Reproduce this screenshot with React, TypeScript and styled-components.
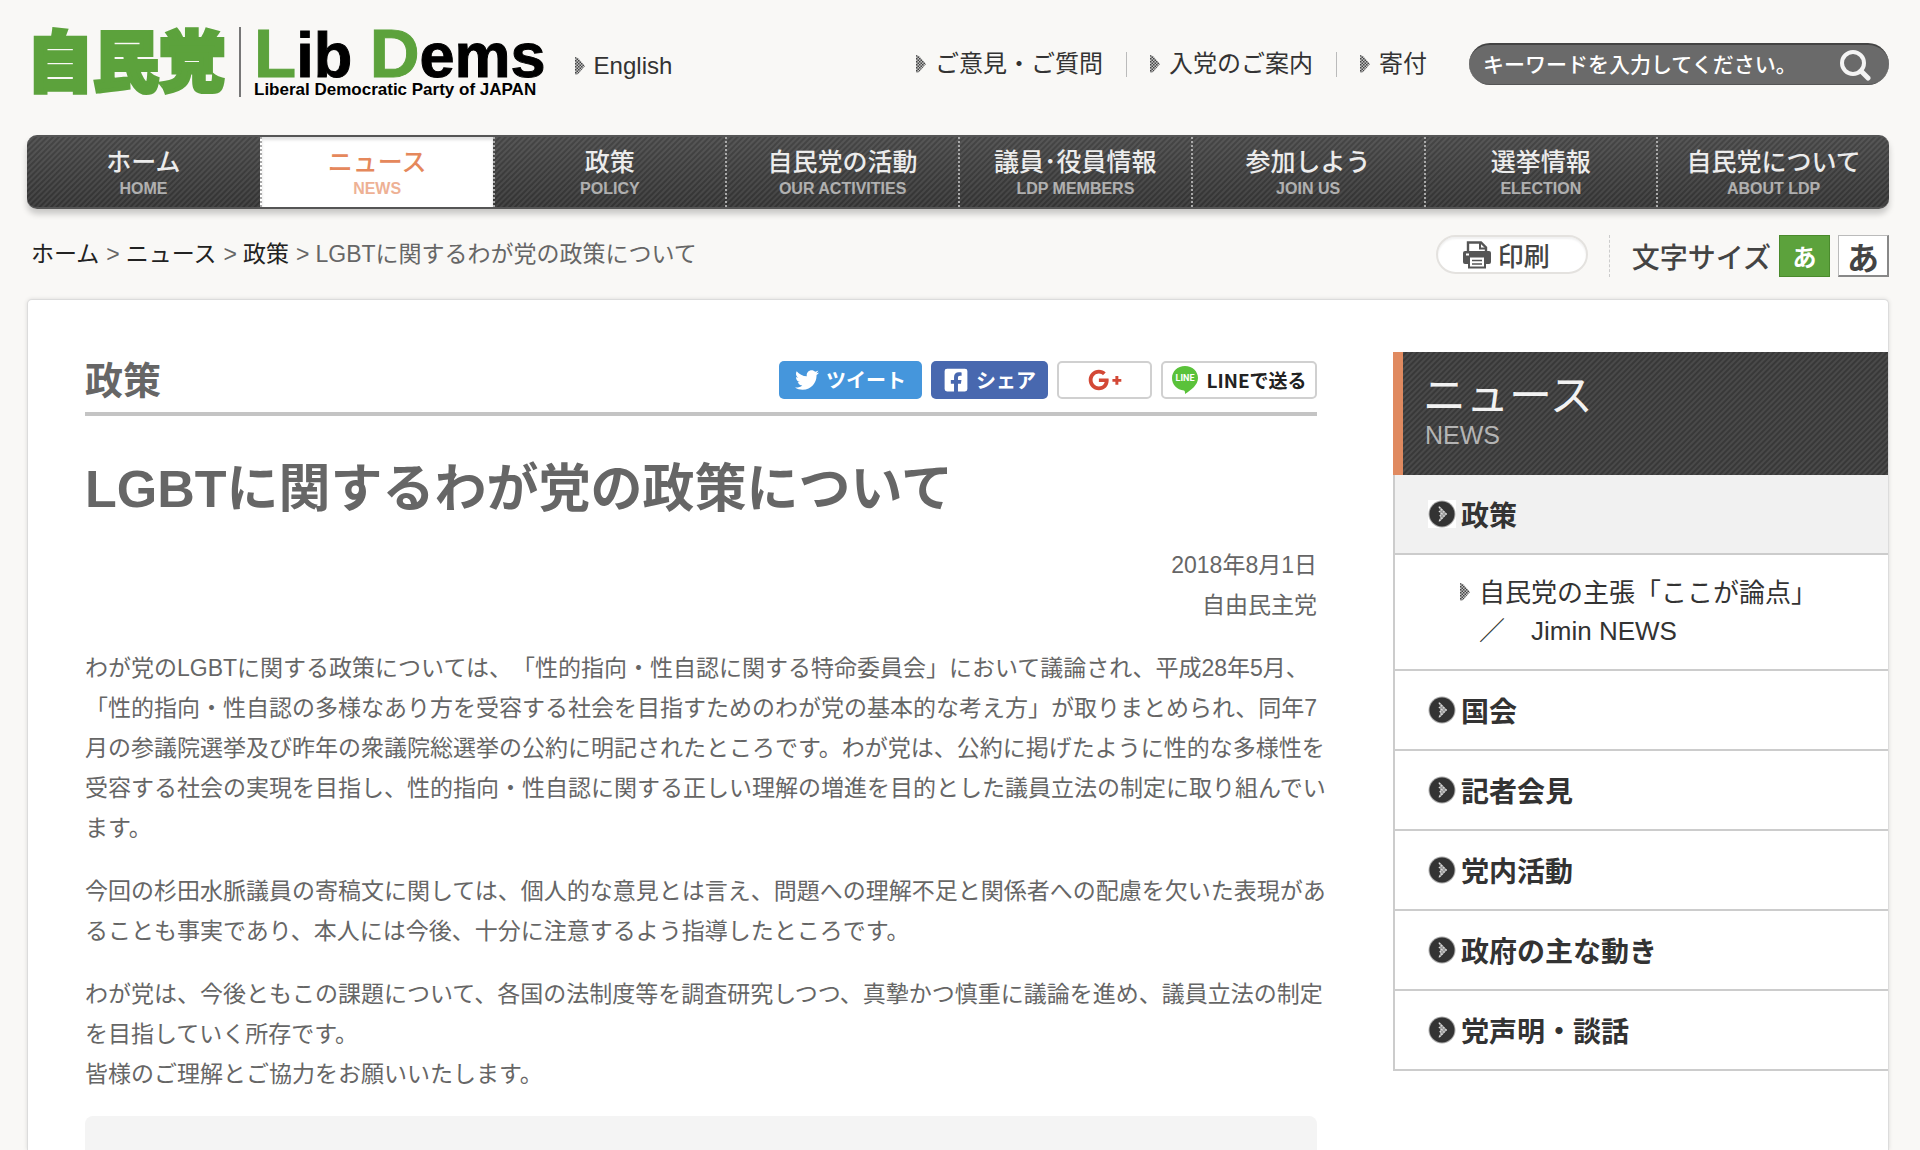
import React, { useState } from "react";
import styled, { createGlobalStyle, css } from "styled-components";
import { FaFacebookSquare, FaGooglePlusG, FaTwitter } from "react-icons/fa";

const jp = `"Noto Sans CJK JP", sans-serif`;
const latin = `"Liberation Sans", Arial, "Noto Sans CJK JP", sans-serif`;
const stripes = `repeating-linear-gradient(135deg, rgba(255, 255, 255, 0.07) 0 1px, rgba(0, 0, 0, 0.06) 2px 3px, rgba(255, 255, 255, 0.07) 4px)`;

const GlobalStyle = createGlobalStyle`
  *, *::before, *::after { box-sizing: border-box; }
  body {
    margin: 0;
    background: #f9f8f6;
    color: #666;
    font-family: ${latin};
    font-size: 23px;
    text-spacing-trim: space-all;
  }
  a { color: inherit; text-decoration: none; }
  ul, ol { list-style: none; margin: 0; padding: 0; }
  h1, h2, p { margin: 0; }
  button, input { font-family: ${jp}; }
`;

const Page = styled.div`
  min-height: 100vh;
  padding: 0 31px 0 27px;
  display: flex;
  flex-direction: column;
`;

const Header = styled.header`
  height: 135px;
  display: flex;
  align-items: flex-start;
`;

const Logo = styled.a`
  display: flex;
  margin-top: 27px;
  height: 70px;
`;

const LogoKanji = styled.span`
  color: #5ca23c;
  font-family: ${jp};
  font-size: 66px;
  font-weight: 900;
  line-height: 60px;
  padding-right: 14px;
  border-right: 2px solid #777;
  -webkit-text-stroke: 4px currentColor;
`;

const LogoLatin = styled.span`
  display: flex;
  flex-direction: column;
  margin-left: 13px;
  color: #000;
  font-weight: 700;
`;

const LogoName = styled.span`
  height: 54px;
  line-height: 54px;
  font-size: 63px;
  white-space: nowrap;
  -webkit-text-stroke: 1px currentColor;
`;

const LogoInitial = styled.span`
  color: #5ca23c;
  font-size: 69px;
`;

const LogoCaption = styled.span`
  font-size: 17px;
  line-height: 18px;
  white-space: nowrap;
`;

const ArrowLink = styled.a`
  display: inline-flex;
  align-items: center;
  gap: 9px;
  color: #333;
  font-size: 24px;
  line-height: 36px;
  white-space: nowrap;
`;

const EnglishSlot = styled.div`
  margin: 48px auto 0 29px;
`;

const UtilityNav = styled.ul`
  display: flex;
  margin-top: 46px;
  li { display: flex; align-items: center; }
  li + li::before {
    content: "";
    height: 25px;
    margin: 0 23px;
    border-left: 1px solid #bbb;
  }
`;

const Search = styled.form`
  width: 420px;
  height: 42px;
  margin: 43px 0 0 42px;
  padding: 0 18px 0 14px;
  display: flex;
  align-items: center;
  border-radius: 21px;
  background: #6a6a6a;
  border-top: 2px solid #444;
  border-bottom: 1px solid #555;
`;

const SearchInput = styled.input`
  flex: 1;
  min-width: 0;
  height: 36px;
  padding: 0;
  border: 0;
  outline: 0;
  background: none;
  color: #fff;
  font-family: ${latin};
  font-size: 21px;
  font-weight: 500;
  &::placeholder { color: #fff; opacity: 1; }
`;

const PlainButton = styled.button`
  display: flex;
  padding: 0;
  border: 0;
  background: none;
  cursor: pointer;
`;

const GlobalNav = styled.nav`
  height: 74px;
  border-radius: 10px;
  overflow: hidden;
  border: 2px solid #555;
  border-width: 2px 0;
  background: ${stripes}, linear-gradient(#4a4a4a, #363636);
  box-shadow: 0 5px 6px rgba(0, 0, 0, 0.2);
  flex: none;
  ul { display: grid; grid-template-columns: repeat(8, 1fr); height: 100%; }
`;

const NavItem = styled.li<{ $active?: boolean }>`
  border-left: 2px dotted #aaa;
  &:first-child { border-left: 0; }
  ${(p) =>
    p.$active
      ? css`
          background: #fff;
          color: #e5885c;
          box-shadow: inset 0 3px 3px rgba(0, 0, 0, 0.12);
        `
      : css`
          color: #ececec;
        `}
`;

const NavLink = styled.a`
  height: 100%;
  padding-top: 5px;
  display: flex;
  flex-direction: column;
  align-items: center;
  font-family: ${jp};
  font-size: 25px;
  font-weight: 500;
  line-height: 36px;
`;

const NavCaption = styled.span`
  font-family: ${latin};
  font-size: 16px;
  font-weight: 700;
  line-height: 22px;
  opacity: 0.65;
`;

const SubBar = styled.div`
  height: 90px;
  padding-top: 26px;
  flex: none;
  display: flex;
  justify-content: space-between;
  align-items: flex-start;
`;

const Crumbs = styled.ol`
  display: flex;
  padding: 0 0 0 4px;
  line-height: 38px;
  a { color: #222; }
  li + li::before { content: ">"; margin: 0 6px 0 7px; }
`;

const Tools = styled.div`
  display: flex;
  height: 42px;
  color: #444;
  font-family: ${jp};
`;

const PrintButton = styled.button`
  display: flex;
  align-items: center;
  gap: 6px;
  width: 152px;
  height: 39px;
  padding: 0 0 0 24px;
  border: 2px solid #e4e2df;
  border-radius: 20px;
  background: #fff;
  color: #444;
  font-size: 26px;
  font-weight: 500;
  line-height: 34px;
  box-shadow: inset 0 2px 2px rgba(0, 0, 0, 0.06);
`;

const SizeGroup = styled.div`
  display: flex;
  align-items: center;
  margin-left: 21px;
  padding-left: 22px;
  border-left: 1px dashed #ccc;
  font-size: 28px;
  font-weight: 500;
`;

const SizeButton = styled.button<{ $on: boolean; $large?: boolean }>`
  width: 51px;
  height: 42px;
  margin-left: 8px;
  padding: 0;
  border: 1px solid ${(p) => (p.$on ? "#4a8a2c" : "#bbb")};
  ${(p) => !p.$on && "border-right: 2px solid #888; border-bottom: 2px solid #888;"}
  background: ${(p) => (p.$on ? "#5ca23c" : "#fff")};
  color: ${(p) => (p.$on ? "#fff" : "#444")};
  font-size: ${(p) => (p.$large ? 32 : 24)}px;
  font-weight: 700;
  line-height: 38px;
`;

const Panel = styled.div`
  flex: 1;
  display: flex;
  gap: 76px;
  padding: 52px 0 0 57px;
  border: 1px solid #dcdcdc;
  border-bottom: 0;
  border-radius: 5px 5px 0 0;
  background: #fff;
  box-shadow: 0 0 4px rgba(0, 0, 0, 0.12);
`;

const Main = styled.main`
  flex: 1;
  min-width: 0;
  display: flex;
  flex-direction: column;
`;

const SectionHead = styled.div`
  display: flex;
  justify-content: space-between;
  align-items: center;
  height: 64px;
  padding-bottom: 4px;
  border-bottom: 4px solid #c4c4c4;
`;

const SectionTitle = styled.h2`
  font-family: ${jp};
  font-size: 38px;
  font-weight: 700;
  line-height: 50px;
  padding-bottom: 5px;
`;

const Share = styled.ul`
  display: flex;
  gap: 9px;
  font-family: ${jp};
`;

const ShareLink = styled.a<{ $width: number; $bg?: string }>`
  width: ${(p) => p.$width}px;
  height: 38px;
  display: flex;
  align-items: center;
  justify-content: center;
  gap: 7px;
  border-radius: 5px;
  font-size: ${(p) => (p.$bg ? 20 : 19)}px;
  font-weight: 700;
  line-height: 36px;
  white-space: nowrap;
  color: ${(p) => (p.$bg ? "#fff" : "#222")};
  background: ${(p) => p.$bg || "#fff"};
  border: ${(p) => (p.$bg ? "0" : "2px solid #d0d0d0")};
`;

const Title = styled.h1`
  margin-top: 35px;
  font-size: 52px;
  font-weight: 700;
  line-height: 76px;
`;

const Byline = styled.p`
  margin-top: 18px;
  text-align: right;
  line-height: 40px;
`;

const Body = styled.div`
  margin-right: -12px;
  p { margin-top: 23px; line-height: 40px; }
`;

const Footnote = styled.div`
  flex: 1;
  min-height: 34px;
  margin-top: 22px;
  border-radius: 8px 8px 0 0;
  background: #f4f4f4;
`;

const Side = styled.aside`
  flex: none;
  width: 495px;
`;

const SideHead = styled.h2`
  height: 123px;
  padding: 12px 0 0 20px;
  border-left: 10px solid #e08a60;
  background: ${stripes}, #3c3c3c;
  color: #f2f2f2;
  font-family: ${jp};
  font-size: 43px;
  font-weight: 400;
  line-height: 57px;
`;

const SideCaption = styled.span`
  display: block;
  padding-left: 2px;
  color: #b4b4b4;
  font-family: ${latin};
  font-size: 25px;
  line-height: 28px;
`;

const SideList = styled.ul`
  border-left: 2px solid #ccc;
`;

const SideItem = styled.li<{ $current?: boolean }>`
  border-bottom: 2px solid #ccc;
  background: ${(p) => (p.$current ? "#f1f1f1" : "#fff")};
`;

const SideLink = styled.a`
  display: flex;
  align-items: center;
  gap: 5px;
  height: 78px;
  padding-left: 33px;
  color: #333;
  font-family: ${jp};
  font-size: 28px;
  font-weight: 700;
`;

const SubLink = styled.a`
  display: flex;
  gap: 9px;
  padding: 19px 0 19px 65px;
  color: #333;
  font-size: 26px;
  line-height: 38px;
  svg { flex: none; margin-top: 9px; }
`;

const Arrow = () => (
  <svg width="10" height="18" viewBox="0 0 10 18" aria-hidden="true">
    <defs>
      <pattern id="check" width="3" height="3" patternUnits="userSpaceOnUse">
        <rect width="3" height="3" fill="#c4c4c4" />
        <rect width="1.5" height="1.5" fill="#444" />
        <rect x="1.500" y="1.500" width="1.500" height="1.500" fill="#444" />
      </pattern>
    </defs>
    <path d="M0 0L3 1L10 9L3 17L0 18Z" fill="url(#check)" />
  </svg>
);

const RoundArrow = () => (
  <svg width="28" height="28" viewBox="0 0 28 28" aria-hidden="true">
    <rect width="28" height="28" fill="#fff" />
    <circle cx="14" cy="14" r="13.5" fill="#aaa" />
    <circle cx="14" cy="14" r="12.5" fill="#333" />
    <path d="M10.500 6L12.500 7L19 14L12.500 21L10.500 22L12 18V10Z" fill="#999" />
    <path d="M11 7L18 14L11 21M11 11L14 14L11 17" fill="none" stroke="#ddd" strokeWidth="1.500" strokeDasharray="1.500 1.500" />
  </svg>
);

const SearchIcon = () => (
  <svg width="32" height="32" viewBox="0 0 32 32" fill="none" stroke="#f4f4f4" aria-hidden="true">
    <circle cx="14" cy="14" r="11" strokeWidth="4" />
    <path d="M22 22L29 29" strokeWidth="5" strokeLinecap="round" />
  </svg>
);

const Printer = () => (
  <svg width="30" height="28" viewBox="0 0 30 28" aria-hidden="true">
    <path d="M6 11V1.5H19L24 6.500V11" fill="#fff" stroke="#555" strokeWidth="2.400" />
    <path d="M18 1V7.500H24" fill="none" stroke="#555" strokeWidth="2" />
    <rect x="1" y="10" width="28" height="13" rx="2" fill="#555" />
    <rect x="7" y="15.500" width="16" height="11" fill="#fff" stroke="#555" strokeWidth="2" />
    <path d="M10 19.500H20M10 23H20" stroke="#555" strokeWidth="1.600" />
    <rect x="4" y="12.500" width="3" height="2" fill="#fff" />
  </svg>
);

const LineBubble = () => (
  <svg width="28" height="30" viewBox="0 0 28 30" aria-hidden="true">
    <path d="M14 1C21.500 1 27 6.500 27 13C27 20 20 25 14 29C14 27 14 26 13 25.500C6 25 1 19.500 1 13C1 6.500 6.500 1 14 1Z" fill="#5ac23a" />
    <text x="14" y="16" textAnchor="middle" fontFamily="Roboto, sans-serif" fontSize="9" fontWeight="700" fill="#fff">
      LINE
    </text>
  </svg>
);

const navItems = [
  ["ホーム", "HOME"],
  ["ニュース", "NEWS"],
  ["政策", "POLICY"],
  ["自民党の活動", "OUR ACTIVITIES"],
  ["議員･役員情報", "LDP MEMBERS"],
  ["参加しよう", "JOIN US"],
  ["選挙情報", "ELECTION"],
  ["自民党について", "ABOUT LDP"],
];

const sideItems = ["国会", "記者会見", "党内活動", "政府の主な動き", "党声明・談話"];

export default function App() {
  const [large, setLarge] = useState(false);
  return (
    <>
      <GlobalStyle />
      <Page lang="ja">
        <Header>
          <Logo href="#">
            <LogoKanji>自民党</LogoKanji>
            <LogoLatin>
              <LogoName>
                <LogoInitial>L</LogoInitial>ib <LogoInitial>D</LogoInitial>ems
              </LogoName>
              <LogoCaption>Liberal Democratic Party of JAPAN</LogoCaption>
            </LogoLatin>
          </Logo>
          <EnglishSlot>
            <ArrowLink href="#"><Arrow />English</ArrowLink>
          </EnglishSlot>
          <UtilityNav>
            {["ご意見・ご質問", "入党のご案内", "寄付"].map((t) => (
              <li key={t}><ArrowLink href="#"><Arrow />{t}</ArrowLink></li>
            ))}
          </UtilityNav>
          <Search onSubmit={(e) => e.preventDefault()}>
            <SearchInput type="text" aria-label="キーワード" placeholder="キーワードを入力してください。" />
            <PlainButton type="submit" aria-label="検索"><SearchIcon /></PlainButton>
          </Search>
        </Header>

        <GlobalNav>
          <ul>
            {navItems.map(([label, caption]) => (
              <NavItem key={caption} $active={caption === "NEWS"}>
                <NavLink href="#">
                  {label}
                  <NavCaption>{caption}</NavCaption>
                </NavLink>
              </NavItem>
            ))}
          </ul>
        </GlobalNav>

        <SubBar>
          <Crumbs>
            <li><a href="#">ホーム</a></li>
            <li><a href="#">ニュース</a></li>
            <li><a href="#">政策</a></li>
            <li>LGBTに関するわが党の政策について</li>
          </Crumbs>
          <Tools>
            <PrintButton type="button"><Printer />印刷</PrintButton>
            <SizeGroup>
              文字サイズ
              <SizeButton type="button" $on={!large} onClick={() => setLarge(false)}>あ</SizeButton>
              <SizeButton type="button" $large $on={large} onClick={() => setLarge(true)}>あ</SizeButton>
            </SizeGroup>
          </Tools>
        </SubBar>

        <Panel>
          <Main>
            <SectionHead>
              <SectionTitle>政策</SectionTitle>
              <Share>
                <li><ShareLink href="#" $width={143} $bg="#4596dc"><FaTwitter size={24} />ツイート</ShareLink></li>
                <li><ShareLink href="#" $width={117} $bg="#4868af"><FaFacebookSquare size={26} />シェア</ShareLink></li>
                <li><ShareLink href="#" $width={95} aria-label="Google+"><FaGooglePlusG size={34} color="#d34836" /></ShareLink></li>
                <li><ShareLink href="#" $width={156}><LineBubble />LINEで送る</ShareLink></li>
              </Share>
            </SectionHead>
            <Title>LGBTに関するわが党の政策について</Title>
            <Byline>2018年8月1日<br />自由民主党</Byline>
            <Body>
              <p>
                わが党のLGBTに関する政策については、「性的指向・性自認に関する特命委員会」において議論され、平成28年5月、<br />
                「性的指向・性自認の多様なあり方を受容する社会を目指すためのわが党の基本的な考え方」が取りまとめられ、同年7<br />
                月の参議院選挙及び昨年の衆議院総選挙の公約に明記されたところです。わが党は、公約に掲げたように性的な多様性を<br />
                受容する社会の実現を目指し、性的指向・性自認に関する正しい理解の増進を目的とした議員立法の制定に取り組んでい<br />
                ます。
              </p>
              <p>
                今回の杉田水脈議員の寄稿文に関しては、個人的な意見とは言え、問題への理解不足と関係者への配慮を欠いた表現があ<br />
                ることも事実であり、本人には今後、十分に注意するよう指導したところです。
              </p>
              <p>
                わが党は、今後ともこの課題について、各国の法制度等を調査研究しつつ、真摯かつ慎重に議論を進め、議員立法の制定<br />
                を目指していく所存です。<br />
                皆様のご理解とご協力をお願いいたします。
              </p>
            </Body>
            <Footnote />
          </Main>
          <Side>
            <SideHead>ニュース<SideCaption>NEWS</SideCaption></SideHead>
            <SideList>
              <SideItem $current><SideLink href="#"><RoundArrow />政策</SideLink></SideItem>
              <SideItem>
                <SubLink href="#">
                  <Arrow />
                  <span>自民党の主張「ここが論点」<br />／　Jimin NEWS</span>
                </SubLink>
              </SideItem>
              {sideItems.map((t) => (
                <SideItem key={t}><SideLink href="#"><RoundArrow />{t}</SideLink></SideItem>
              ))}
            </SideList>
          </Side>
        </Panel>
      </Page>
    </>
  );
}
